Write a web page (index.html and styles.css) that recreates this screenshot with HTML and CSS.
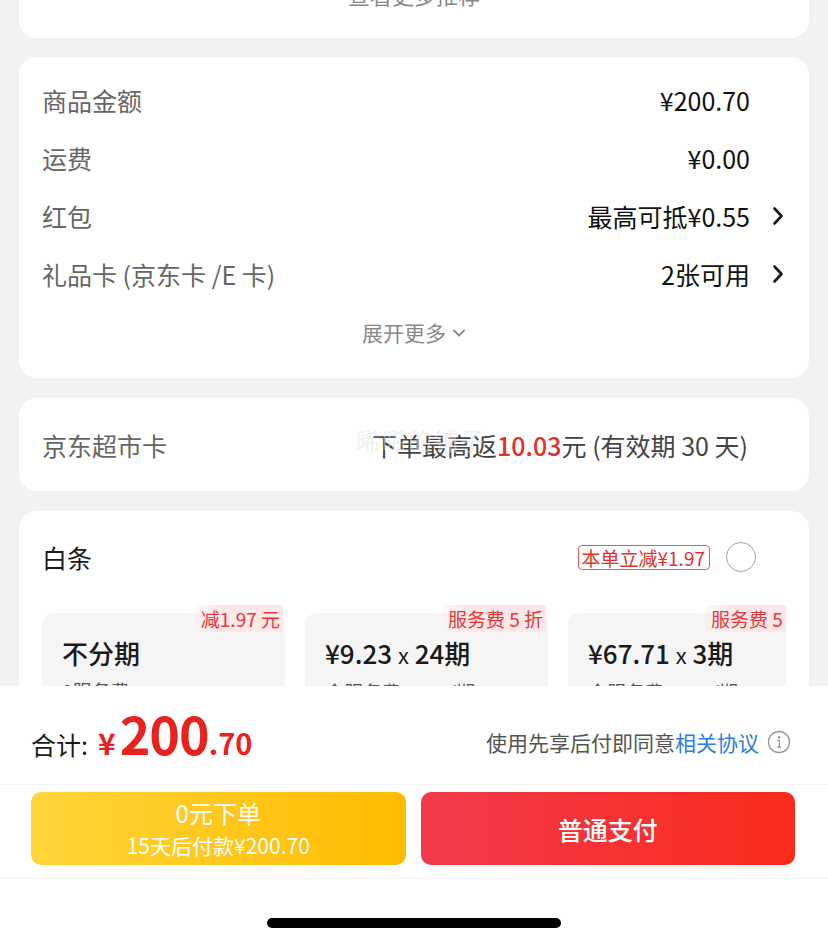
FILE: index.html
```html
<!DOCTYPE html>
<html lang="zh-CN">
<head>
  <meta charset="UTF-8">
  <meta name="viewport" content="width=device-width, initial-scale=1.0">
  <title>确认订单</title>
  <link rel="stylesheet" href="styles.css">
</head>
<body>
  <div class="page">
    <div class="scroll">
      <div class="card card-more">
        <div class="more-link">查看更多推荐</div>
      </div>

      <div class="card card-price">
        <div class="row">
          <div class="label">商品金额</div>
          <div class="value">¥200.70</div>
          <div class="arrow"></div>
        </div>
        <div class="row">
          <div class="label">运费</div>
          <div class="value">¥0.00</div>
          <div class="arrow"></div>
        </div>
        <div class="row">
          <div class="label">红包</div>
          <div class="value">最高可抵¥0.55</div>
          <div class="arrow">
            <svg width="12" height="20" viewBox="0 0 12 20"><path d="M2.5 2.5 L9.5 10 L2.5 17.5" fill="none" stroke="#1a1a1a" stroke-width="2.6" stroke-linecap="round" stroke-linejoin="round"/></svg>
          </div>
        </div>
        <div class="row">
          <div class="label">礼品卡 (京东卡 /E 卡)</div>
          <div class="value">2张可用</div>
          <div class="arrow">
            <svg width="12" height="20" viewBox="0 0 12 20"><path d="M2.5 2.5 L9.5 10 L2.5 17.5" fill="none" stroke="#1a1a1a" stroke-width="2.6" stroke-linecap="round" stroke-linejoin="round"/></svg>
          </div>
        </div>
        <div class="row expand">
          <span>展开更多</span>
          <svg width="14" height="10" viewBox="0 0 14 10"><path d="M2 2.5 L7 7.5 L12 2.5" fill="none" stroke="#888" stroke-width="1.8" stroke-linecap="round" stroke-linejoin="round"/></svg>
        </div>
      </div>

      <div class="card card-market">
        <div class="label">京东超市卡</div>
        <div class="market-value">下单最高返<span class="red">10.03</span>元 (有效期 30 天)</div>
        <span class="watermark">晞晞的铺子</span>
      </div>

      <div class="card card-baitiao">
        <div class="bt-head">
          <div class="bt-title">白条</div>
          <div class="bt-badge">本单立减¥1.97</div>
          <div class="radio"></div>
        </div>
        <div class="plans">
          <div class="plan">
            <div class="plan-tag">减1.97 元</div>
            <div class="plan-title">不分期</div>
            <div class="plan-sub">0服务费</div>
          </div>
          <div class="plan">
            <div class="plan-tag">服务费 5 折</div>
            <div class="plan-title">¥9.23 <span class="times">x</span> 24期</div>
            <div class="plan-sub">含服务费¥0.81/期</div>
          </div>
          <div class="plan">
            <div class="plan-tag">服务费 5 折</div>
            <div class="plan-title">¥67.71 <span class="times">x</span> 3期</div>
            <div class="plan-sub">含服务费¥0.81/期</div>
          </div>
        </div>
      </div>
    </div>

    <div class="footer">
      <div class="total-row">
        <div class="total">
          <span class="total-label">合计:</span>
          <span class="yen">¥</span><span class="int">200</span><span class="dec">.70</span>
        </div>
        <div class="agree">
          使用先享后付即同意<span class="link">相关协议</span>
          <svg class="info" width="24" height="24" viewBox="0 0 24 24">
            <circle cx="12" cy="12" r="10.5" fill="none" stroke="#999" stroke-width="1.3"/>
            <circle cx="12" cy="7.3" r="1.2" fill="#999"/>
            <path d="M10.3 10.3 H12.4 V17 M10.2 17 H14" fill="none" stroke="#999" stroke-width="1.3"/>
          </svg>
        </div>
      </div>
      <div class="btn-row">
        <div class="btn btn-later">
          <div class="btn-main">0元下单</div>
          <div class="btn-sub">15天后付款¥200.70</div>
        </div>
        <div class="btn btn-pay">普通支付</div>
      </div>
      <div class="home-area">
        <div class="home-bar"></div>
      </div>
    </div>
  </div>
</body>
</html>
```

FILE: styles.css
```css
body {
  margin: 0;
  background-color: #f2f2f2;
  font-family: "Noto Sans CJK SC", "Noto Sans", sans-serif;
  color: #1a1a1a;
}
.page {
  width: 828px;
  height: 945px;
  display: flex;
  flex-direction: column;
  overflow: hidden;
}
.scroll {
  height: 686px;
  overflow: hidden;
  display: flex;
  flex-direction: column;
  gap: 20px;
}
.card {
  background-color: #fff;
  border-radius: 18px;
  margin: 0 19px;
  flex-shrink: 0;
}
.card-more {
  height: 80px;
  margin-top: -42px;
  margin-bottom: -1px;
  box-sizing: border-box;
  padding-top: 20px;
}
.more-link {
  text-align: center;
  line-height: 32px;
  font-size: 22px;
  color: #888;
}

/* 金额明细 */
.card-price {
  padding: 14px 23px 17px;
}
.row {
  height: 58px;
  display: flex;
  align-items: center;
}
.label {
  flex: 1;
  font-size: 25px;
  color: #666;
}
.value {
  font-size: 25px;
  color: #111;
}
.arrow {
  width: 36px;
  display: flex;
  justify-content: flex-end;
  padding-right: 2px;
  box-sizing: border-box;
}
.arrow svg {
  display: block;
}
.row.expand {
  justify-content: center;
  gap: 6px;
  font-size: 21px;
  color: #888;
}
.row.expand svg {
  margin-top: 2px;
}

/* 超市卡 */
.card-market {
  height: 93px;
  padding: 0 61px 0 23px;
  display: flex;
  align-items: center;
  position: relative;
}
.market-value {
  font-size: 25px;
  color: #444;
}
.market-value .red {
  color: #e4312a;
  font-weight: 500;
}
.watermark {
  position: absolute;
  left: 337px;
  top: 24px;
  font-size: 24px;
  color: rgba(225, 225, 225, 0.5);
  letter-spacing: 2px;
  pointer-events: none;
}

/* 白条 */
.card-baitiao {
  padding: 30px 23px 40px;
}
.bt-head {
  height: 32px;
  display: flex;
  align-items: center;
  padding-right: 30px;
}
.bt-title {
  flex: 1;
  font-size: 25px;
  color: #1a1a1a;
}
.bt-badge {
  font-size: 19px;
  line-height: 23px;
  color: #e4312a;
  border: 1px solid #e45a52;
  border-radius: 4px;
  padding: 0 4px 0 3px;
}
.radio {
  width: 28px;
  height: 28px;
  border: 1.5px solid #a0a0a0;
  border-radius: 50%;
  margin-left: 16px;
}
.plans {
  display: flex;
  gap: 20px;
  margin-top: 32px;
  padding-top: 8px;
  overflow: hidden;
}
.plan {
  flex: 0 0 243px;
  height: 130px;
  background-color: #f5f5f5;
  border-radius: 12px;
  position: relative;
  padding: 22px 20px 0;
  box-sizing: border-box;
}
.plan-tag {
  position: absolute;
  top: -8px;
  right: 2px;
  font-size: 19px;
  line-height: 27px;
  color: #e4393c;
  background: linear-gradient(90deg, rgba(253, 232, 231, 0.3), #fde8e7 25%);
  border-radius: 4px;
  padding: 0 3px 0 6px;
}
.plan-title {
  font-size: 26px;
  font-weight: 500;
  line-height: 36px;
  color: #1a1a1a;
}
.plan-title .times {
  font-weight: 400;
  font-size: 22px;
}
.plan-sub {
  font-size: 19px;
  color: #555;
  margin-top: 6px;
}

/* 底部栏 */
.footer {
  flex: 1;
  background-color: #fff;
  display: flex;
  flex-direction: column;
}
.total-row {
  height: 99px;
  display: flex;
  align-items: center;
  justify-content: space-between;
  padding: 0 37px 0 31px;
  border-bottom: 1px solid #f4f4f4;
  box-sizing: border-box;
}
.total {
  display: flex;
  align-items: baseline;
  color: #e8231f;
  margin-top: -4px;
}
.total-label {
  font-size: 25px;
  color: #1a1a1a;
  margin-right: 10px;
}
.yen {
  font-size: 30px;
  font-weight: 700;
  margin-right: 4px;
}
.int {
  font-size: 52px;
  font-weight: 700;
  letter-spacing: -1px;
  line-height: 60px;
}
.dec {
  font-size: 29px;
  font-weight: 700;
}
.agree {
  display: flex;
  align-items: center;
  font-size: 21px;
  color: #555;
  margin-top: 14px;
}
.agree .link {
  color: #2b7de0;
}
.info {
  margin-left: 8px;
}
.btn-row {
  height: 94px;
  display: flex;
  gap: 15px;
  padding: 7px 33px 13px 31px;
  box-sizing: border-box;
  border-bottom: 1px solid #f6f6f6;
}
.btn {
  flex: 1;
  border-radius: 10px;
  color: #fff;
  display: flex;
  flex-direction: column;
  align-items: center;
  justify-content: center;
}
.btn-later {
  background: linear-gradient(90deg, #ffd53a, #ffbb00);
}
.btn-main {
  font-size: 24px;
  line-height: 32px;
}
.btn-sub {
  font-size: 21px;
  line-height: 32px;
}
.btn-pay {
  background: linear-gradient(90deg, #f23a4c, #fa2b1c);
  font-size: 25px;
  font-weight: 500;
}
.home-area {
  flex: 1;
  display: flex;
  justify-content: center;
  padding-top: 39px;
}
.home-bar {
  width: 294px;
  height: 10px;
  border-radius: 5px;
  background-color: #000;
}
```
